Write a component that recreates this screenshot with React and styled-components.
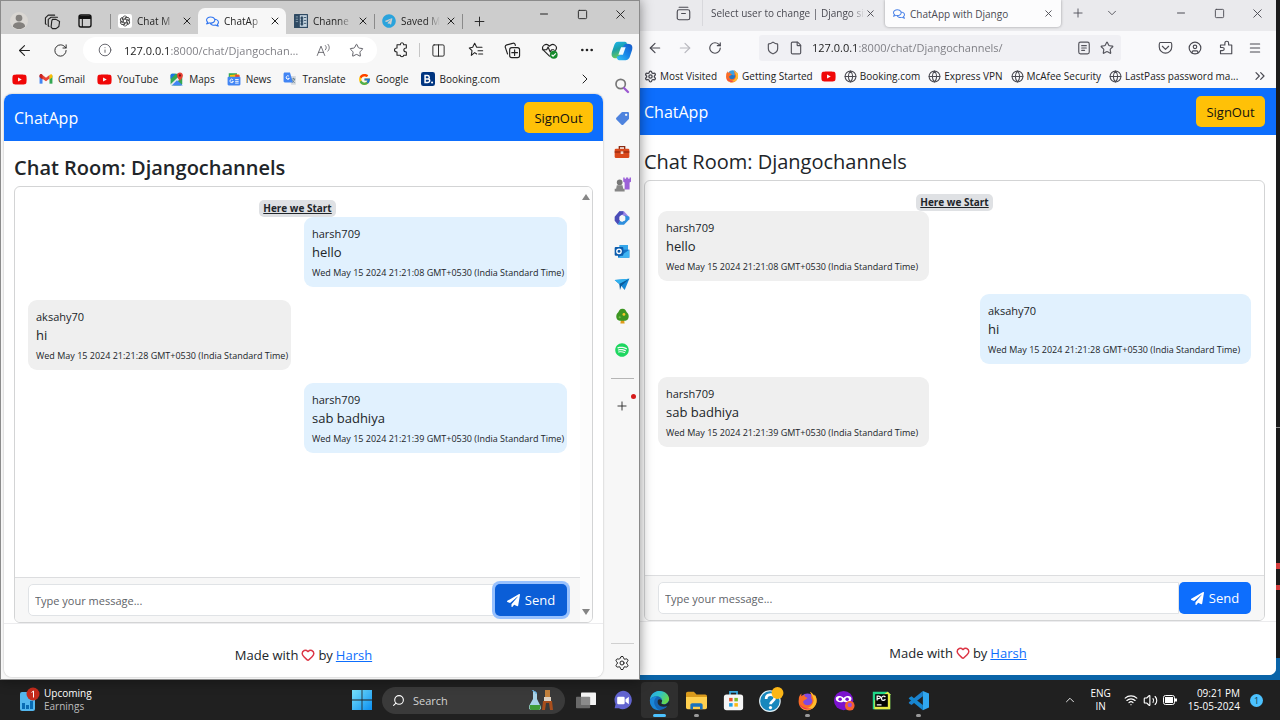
import React from "react";
import styled, { createGlobalStyle, css } from "styled-components";
import {
  ArrowLeft, ArrowRight, RotateCw, X, Plus, Minus, Square, Info, Star, Columns2,
  Ellipsis, ChevronRight, ChevronDown, ChevronUp, ChevronsRight, Search, Settings, Shield, File,
  Globe, Menu, Wifi, Volume2, CircleUser, Heart,
} from "lucide-react";
import { FaRegComments, FaPaperPlane, FaYoutube, FaTelegram, FaSpotify, FaTag } from "react-icons/fa";
import { FcGoogle } from "react-icons/fc";

const GlobalStyle = createGlobalStyle`
  *, *::before, *::after { box-sizing: border-box; }
  body {
    margin: 0;
    font-family: "Open Sans", "Noto Sans", sans-serif;
    font-size: 14px;
    color: #212529;
    background: #1c1c1c;
  }
  button, input { font: inherit; color: inherit; margin: 0; }
  button { border: 0; padding: 0; background: none; }
  svg { display: block; flex: none; }
`;

/* ---------- desktop ---------- */

const Desktop = styled.div`
  min-height: 100vh;
  display: grid;
  grid-template-rows: 1fr 40px;
`;

const Workspace = styled.div`
  display: grid;
  grid-template-columns: minmax(0, 1fr) minmax(0, 1fr);
  background:
    linear-gradient(#d33c3c, #d33c3c) right 0 top 563px / 4px 6px no-repeat,
    linear-gradient(#d33c3c, #d33c3c) right 0 top 585px / 4px 5px no-repeat,
    linear-gradient(#8a8a8a, #8a8a8a) right 0 top 427px / 4px 1px no-repeat,
    linear-gradient(#0a64a8, #0a64a8) bottom / 100% 22px no-repeat,
    #1b1b1b;
`;

const EdgeWindow = styled.section`
  position: relative;
  z-index: 1;
  display: flex;
  flex-direction: column;
  border: 1px solid #8b8b8b;
  background: #f7f7f7;
  box-shadow: 0 0 12px rgba(0, 0, 0, 0.45);
`;

const FirefoxWindow = styled.section`
  display: flex;
  flex-direction: column;
  margin: 0 4px 5px 0;
  background: #f9f9fb;
  border-radius: 0 0 7px 0;
  overflow: hidden;
`;

const TabStrip = styled.div`
  display: flex;
  height: ${(p) => (p.$firefox ? 31 : 33)}px;
  background: ${(p) => (p.$firefox ? "#eaeaed" : "#cdcdcd")};
`;

const StripIcons = styled.div`
  display: flex;
  align-items: center;
  gap: 16px;
  color: #4a4a52;
  padding: ${(p) => (p.$firefox ? "0 11px 4px 36px" : "7px 17px 0 9px")};
`;

const EdgeTab = styled.div`
  display: flex;
  align-items: center;
  flex: none;
  gap: 5px;
  width: 88px;
  height: 26px;
  margin-top: 7px;
  padding: 0 7px 0 8px;
  font-size: 10px;
  color: #222;
  ${(p) => p.$active && css`background: #f7f7f7; border-radius: 7px 7px 0 0;`}
  ${(p) => p.$divided && css`background: linear-gradient(#8a8a8a, #8a8a8a) left center / 1px 15px no-repeat;`}
`;

const NewTabCell = styled(EdgeTab)`
  width: 34px;
`;

const FirefoxTab = styled.div`
  display: flex;
  align-items: center;
  gap: ${(p) => (p.$active ? 5 : 0)}px;
  width: ${(p) => (p.$active ? 176 : 181)}px;
  height: ${(p) => (p.$active ? 27 : 26)}px;
  margin-right: ${(p) => (p.$active ? 0 : 2)}px;
  padding: 0 8px;
  font-size: 10px;
  color: #4a4a52;
  border-left: 1px solid #d8d8dc;
  ${(p) => p.$active && css`
    background: #fcfcfd;
    border: 0;
    border-radius: 0 0 4px 4px;
    box-shadow: 0 0 3px rgba(0, 0, 0, 0.35);
  `}
`;

const TabTitle = styled.button`
  flex: 1;
  min-width: 0;
  overflow: hidden;
  white-space: nowrap;
  text-align: left;
  ${(p) => p.$fade && css`mask-image: linear-gradient(90deg, #000 calc(100% - 14px), transparent);`}
`;

const IconButton = styled.button`
  display: grid;
  place-items: center;
  flex: none;
  width: ${(p) => p.$w || 30}px;
  height: ${(p) => p.$h || 26}px;
  color: ${(p) => p.$color || "#222"};
`;

const CloseButton = styled(IconButton)`
  width: 10px;
  height: 14px;
`;

const WindowControls = styled.div`
  display: flex;
  margin-left: auto;
`;

/* ---------- address bars ---------- */

const Toolbar = styled.div`
  display: flex;
  align-items: center;
  height: ${(p) => (p.$firefox ? 33 : 32)}px;
  padding-left: ${(p) => (p.$firefox ? 0 : 5)}px;
  padding-right: ${(p) => (p.$firefox ? 6 : 0)}px;
`;

const AddressBar = styled.label`
  display: flex;
  align-items: center;
  flex: 1;
  min-width: 0;
  height: 26px;
  gap: ${(p) => (p.$firefox ? 9 : 12)}px;
  padding: ${(p) => (p.$firefox ? "0 7px" : "0 8px 0 15px")};
  margin: ${(p) => (p.$firefox ? "0 29px 0 29px" : "0 5px 0 5px")};
  border-radius: ${(p) => (p.$firefox ? 3 : 13)}px;
  background: ${(p) => (p.$firefox ? "#f0f0f4" : "#fff")};
  color: #55555d;
`;

const AddressInput = styled.input`
  flex: 1;
  min-width: 0;
  width: 0;
  border: 0;
  padding: 0;
  outline: 0;
  font-size: 11px;
  text-overflow: ellipsis;
  color: transparent;
  background: linear-gradient(90deg, #1b1b1b 46px, #7a7a80 46px);
  background-clip: text;
`;

const Divider = styled.span`
  width: 1px;
  height: 14px;
  background: #c6c6c6;
`;

const Bookmarks = styled.nav`
  display: flex;
  align-items: center;
  height: ${(p) => (p.$firefox ? 24 : 28)}px;
  gap: ${(p) => (p.$firefox ? 8 : 12)}px;
  padding: ${(p) => (p.$firefox ? "0 10px 0 4px" : "0 14px 2px 11px")};
  font-size: 10px;
`;

const Bookmark = styled.a`
  display: flex;
  align-items: center;
  gap: ${(p) => (p.$firefox ? 3 : 5)}px;
  color: #222;
  text-decoration: none;
  white-space: nowrap;
`;

const Overflow = styled(IconButton)`
  margin-left: auto;
  width: 14px;
`;

const EdgeBody = styled.div`
  flex: 1;
  display: flex;
`;

const EdgeMain = styled.div`
  flex: 1;
  min-width: 0;
  display: flex;
  flex-direction: column;
`;

const PageFrame = styled.div`
  flex: 1;
  display: flex;
  margin: 0 2px 2px 3px;
  border-radius: 8px;
  overflow: hidden;
  box-shadow: 0 0 2px rgba(0, 0, 0, 0.3);
`;

const Sidebar = styled.aside`
  display: flex;
  flex-direction: column;
  align-items: center;
  width: 34px;
`;

const SideButton = styled(IconButton)`
  position: relative;
  width: 34px;
  height: 33px;
  ${(p) => p.$first && css`margin-bottom: 2px;`}
`;

const SideRule = styled.span`
  width: 23px;
  height: 1px;
  margin: 12px 0 10px;
  background: #b5b5b5;
`;

const BottomRule = styled(SideRule)`
  margin: auto 0 2px;
  background: #d0d0d0;
`;

const RedDot = styled.span`
  position: absolute;
  top: 5px;
  right: 3px;
  width: 5px;
  height: 5px;
  border-radius: 50%;
  background: #d51a1a;
`;

/* ---------- chat page ---------- */

const Page = styled.div`
  flex: 1;
  min-width: 0;
  display: flex;
  flex-direction: column;
  background: #fff;
`;

const PageHeader = styled.header`
  display: flex;
  align-items: center;
  justify-content: space-between;
  height: 47px;
  padding: ${(p) => (p.$firefox ? "0 11px 0 4px" : "0 10px")};
  background: #0d6efd;
`;

const Brand = styled.a`
  font-size: 16px;
  color: #fff;
  text-decoration: none;
`;

const SignOut = styled.button`
  width: 69px;
  height: 31px;
  border-radius: 5px;
  font-size: 13px;
  color: #111;
  background: #ffc107;
`;

const PageMain = styled.main`
  flex: 1;
  display: flex;
  flex-direction: column;
  padding: ${(p) => (p.$firefox ? "15px 11px 0 4px" : "15px 10px 0")};
`;

const Title = styled.h1`
  margin: 0 0 6px;
  font-size: 20px;
  line-height: 24px;
  font-weight: ${(p) => (p.$firefox ? 400 : 600)};
`;

const Card = styled.div`
  flex: 1;
  display: flex;
  border: 1px solid #d3d4d5;
  border-radius: 6px;
  overflow: hidden;
`;

const CardContent = styled.div`
  flex: 1;
  min-width: 0;
  display: flex;
  flex-direction: column;
`;

const Messages = styled.div`
  flex: 1;
  display: flex;
  flex-direction: column;
  padding: 13px;
`;

const StartBadge = styled.span`
  align-self: center;
  padding: 0 4px;
  border-radius: 5px;
  font-size: 10px;
  line-height: 17px;
  font-weight: 700;
  text-decoration: underline;
  background: #dfe1e4;
`;

const Bubble = styled.article`
  align-self: ${(p) => (p.$mine ? "flex-end" : "flex-start")};
  width: ${(p) => (p.$wide ? 271 : 263)}px;
  height: 70px;
  margin-bottom: 13px;
  padding: 8px;
  border-radius: 9px;
  white-space: nowrap;
  background: ${(p) => (p.$mine ? "#e1f1fe" : "#efefef")};
`;

const Author = styled.div`
  font-size: 11px;
  line-height: 18px;
`;

const Body = styled.div`
  font-size: 13px;
  line-height: 18px;
`;

const Stamp = styled.time`
  display: block;
  margin-top: 5px;
  font-size: 9px;
  line-height: 14px;
`;

const Composer = styled.form`
  display: flex;
  padding: 6px 13px;
  border-top: 1px solid #dcdddf;
  background: #f7f7f7;
`;

const MessageInput = styled.input`
  flex: 1;
  min-width: 0;
  height: 32px;
  padding: 0 6px;
  border: 1px solid #e0e3e6;
  border-radius: 5px 0 0 5px;
  font-size: 11px;
  background: #fff;
  &::placeholder { color: #5f6469; opacity: 1; }
`;

const SendButton = styled.button`
  display: flex;
  align-items: center;
  justify-content: center;
  gap: 5px;
  width: 72px;
  height: 32px;
  border-radius: 5px;
  font-size: 13px;
  color: #fff;
  background: ${(p) => (p.$focused ? "#0b5ed7" : "#0d6efd")};
  box-shadow: ${(p) => (p.$focused ? "0 0 0 3px #98c1fe" : "none")};
`;

const ScrollTrack = styled.div`
  display: flex;
  flex-direction: column;
  align-items: center;
  justify-content: space-between;
  width: 12px;
  padding: 7px 0;
  background: #fcfcfc;
`;

const PageFooter = styled.footer`
  display: flex;
  align-items: center;
  justify-content: center;
  gap: 3px;
  height: 54px;
  padding-top: 8px;
  border-top: 1px solid #ececee;
  font-size: 13px;
  a { color: #0d6efd; }
`;

/* ---------- taskbar ---------- */

const Taskbar = styled.footer`
  display: grid;
  grid-template-columns: 1fr auto 1fr;
  align-items: center;
  background: #202020;
  color: #fff;
  font-size: 10px;
  line-height: 13px;
`;

const Widget = styled.button`
  justify-self: start;
  display: flex;
  align-items: center;
  gap: 4px;
  padding-left: 19px;
  text-align: left;
  span { color: #bdbdbd; }
`;

const TaskCenter = styled.div`
  display: flex;
  align-items: center;
`;

const TaskButton = styled.button`
  position: relative;
  display: grid;
  place-items: center;
  width: 37px;
  height: 36px;
  border-radius: 4px;
  background: ${(p) => (p.$active ? "#2f2f2f" : "none")};
  &::after {
    content: "";
    position: absolute;
    bottom: 1px;
    width: ${(p) => (p.$active ? 13 : 5)}px;
    height: 3px;
    border-radius: 2px;
    background: ${(p) => (p.$active ? "#4cc2ff" : p.$running ? "#9a9a9a" : "transparent")};
  }
`;

const SearchBox = styled.label`
  display: flex;
  align-items: center;
  gap: 8px;
  width: 183px;
  height: 27px;
  margin: 0 2px;
  padding: 0 11px 0 10px;
  border-radius: 14px;
  background: #3a3a3a;
`;

const SearchInput = styled.input`
  flex: 1;
  width: 0;
  border: 0;
  padding: 0;
  outline: 0;
  background: none;
  font-size: 11px;
  &::placeholder { color: #d2d2d2; opacity: 1; }
`;

const Tray = styled.div`
  justify-self: end;
  display: flex;
  align-items: center;
  gap: 5px;
  padding-right: 17px;
`;

const TrayText = styled.div`
  padding: ${(p) => (p.$align === "center" ? "0 8px" : "0 5px 0 6px")};
  text-align: ${(p) => p.$align};
`;

const CountBadge = styled.span`
  display: grid;
  place-items: center;
  width: 13px;
  height: 13px;
  border-radius: 50%;
  font-size: 9px;
  color: #14394d;
  background: #4cc2ff;
`;

/* ---------- drawings ---------- */

const Svg = ({ s = 16, children, ...rest }) => (
  <svg width={s} height={s} viewBox="0 0 24 24" fill="none" aria-hidden="true" {...rest}>{children}</svg>
);
const line = { stroke: "currentColor", strokeWidth: 1.6, strokeLinecap: "round", strokeLinejoin: "round" };

const YouTube = () => <FaYoutube size={15} color="#f00707" />;
const Gmail = () => (
  <Svg s={14}>
    <path d="M1 20V6h5v14z" fill="#4285f4" /><path d="M18 20V6h5v14z" fill="#34a853" />
    <path d="M1 7c0-4 3-4 5-2l6 5 6-5v6l-6 5-11-8z" fill="#ea4335" /><path d="M18 5c2-2 5-2 5 2v2l-5 4z" fill="#fbbc04" />
    <path d="M1 7c0-3 2-4 4-3l1 1v8l-5-4z" fill="#c5221f" />
  </Svg>
);
const MapsIcon = () => (
  <Svg s={14}>
    <rect x="1" y="3" width="20" height="20" rx="3" fill="#34a853" /><path d="M1 21 20 3 23 6 6 23H3z" fill="#e8eaed" />
    <path d="M3 23 12 14l10 9z" fill="#4285f4" /><path d="M1 12 10 3H4C2 3 1 4 1 6z" fill="#1a73e8" />
    <path d="M17 1c-3 0-5 2-5 5 0 4 5 9 5 9s5-5 5-9c0-3-2-5-5-5z" fill="#ea4335" /><circle cx="17" cy="6" r="2" fill="#7b1712" />
  </Svg>
);
const NewsIcon = () => (
  <Svg s={14}>
    <path d="M3 2h14l1 7H3z" fill="#34a853" /><path d="m5 5 16-1v5H5z" fill="#fbbc04" /><path d="m14 4 8 2-1 4h-7z" fill="#ea4335" />
    <rect x="1" y="8" width="22" height="15" rx="2" fill="#4285f4" />
    <path d="M10 13a3 3 0 1 0 1 3H8M14 13h6M14 16h6M14 19h6" stroke="#fff" strokeWidth="1.6" />
  </Svg>
);
const TranslateIcon = () => (
  <Svg s={14}>
    <path d="M10 7h12v15H14z" fill="#d5d9df" /><path d="M2 1h10l5 17H3c-1 0-2-1-2-2V3z" fill="#4285f4" />
    <path d="M10 7a3 3 0 1 0 1 4H8" stroke="#fff" strokeWidth="1.6" /><path d="M15 12h6m-3-2v2m2 0c-1 4-3 5-4 6m0-4 4 5" stroke="#617d8b" strokeWidth="1.4" />
  </Svg>
);
const BookingIcon = () => (
  <Svg s={14}>
    <rect width="24" height="24" rx="4" fill="#003580" />
    <path d="M7 6v12h4c5 0 5-6 1-6 3 0 3-6-1-6zm0 6h5" stroke="#fff" strokeWidth="2.6" /><circle cx="19" cy="18" r="1.8" fill="#fff" />
  </Svg>
);
const Avatar = () => (
  <Svg s={18}><circle cx="12" cy="12" r="12" fill="#dad7d3" /><circle cx="12" cy="8" r="4.5" fill="#83807d" /><path d="M4 19c0-7 16-7 16 0-3 5-13 5-16 0z" fill="#83807d" /></Svg>
);
const Workspaces = () => (
  <Svg s={17} {...line} stroke="#222">
    <path d="M12 9h5l5 3-1 7-4 3h-5l-2-2 1-9zM7 19l-1-1V9l4-3h9M3 16l-1-1V7l4-4h9" />
  </Svg>
);
const TabActions = () => (
  <Svg s={16}><rect x="3" y="3" width="18" height="18" rx="3" stroke="#111" strokeWidth="2" /><path d="M3 4h18v5H3z" fill="#111" /><path d="M8 9v12" stroke="#111" strokeWidth="1.5" /></Svg>
);
const OpenAi = () => (
  <Svg s={14}>
    <rect width="24" height="24" rx="4" fill="#fff" />
    <g stroke="#222" strokeWidth="1.3">
      {[0, 60, 120, 180, 240, 300].map((a) => (
        <path key={a} transform={`rotate(${a} 12 12)`} d="M12 8.500 8.500 10.500V6C9 3.200 13 2.500 15 5l-3.500 2" />
      ))}
    </g>
  </Svg>
);
const ChannelsIcon = () => (
  <Svg s={14}>
    <rect width="24" height="24" rx="1" fill="#2f4a63" /><path d="M10 2h12v20H10z" fill="#c5d4df" />
    <path d="M12 5h3v4h-3zm0 5h3v4h-3zm0 5h3v4h-3zM17 6h4M17 11h4M17 16h4" fill="#2f4a63" stroke="#2f4a63" strokeWidth="1.5" />
    <path d="M3 5h4M3 9h4M3 13h4" stroke="#8fa5b6" strokeWidth="1.5" />
  </Svg>
);
const Comments = ({ color = "#2f74f0", size = 13 }) => <FaRegComments size={size} color={color} />;
const ReadAloud = () => (
  <Svg s={15} {...line} strokeWidth={1.3}><path d="M2 20 8 5l6 15M4 15h8M15 4c2 2 2 5 0 7M19 2c3 3 3 8 0 11" /></Svg>
);
const EdgePuzzle = () => (
  <Svg s={16} {...line}>
    <path d="M8 4h3c0-4 5-4 5 0h4v5c-5 0-5 6 0 6v5h-4c0 3-5 3-5 0H6v-5c-5 0-5-6 0-6V4z" />
  </Svg>
);
const ArchiveBox = () => (
  <Svg s={15} {...line} strokeWidth={1.8}><path d="M5 2h14" /><rect x="2" y="6" width="20" height="16" rx="3" /><path d="M9 12h6" /></Svg>
);
const Favorites = () => (
  <Svg s={16} {...line}><path d="M13 18 10 16 5 20l1-7-4-4 5-1 3-6 3 6h8M15 13h7M16 18h6" /></Svg>
);
const Collections = () => (
  <Svg s={17} {...line}><rect x="8" y="8" width="14" height="14" rx="3" /><path d="M15 11v8M11 15h8M5 17l-3-9c-1-2 0-3 2-4l8-2c2-1 4 0 4 3" /></Svg>
);
const Essentials = () => (
  <Svg s={17}>
    <path d="M12 20 3 11C0 6 7 0 12 6c5-6 12 0 9 5l-2 2M2 11h6l2-4 3 7 2-3h3" {...line} />
    <circle cx="18" cy="18" r="5.500" fill="#158a2c" /><path d="m15 18 2 2 4-4" stroke="#fff" strokeWidth="1.500" />
  </Svg>
);
const Copilot = () => (
  <Svg s={22}>
    <defs>
      <linearGradient id="cpA" x1="0" y1="0" x2="0.300" y2="1"><stop stopColor="#1bb6ee" /><stop offset="0.500" stopColor="#1a9fa9" /><stop offset="1" stopColor="#6acb5b" /></linearGradient>
      <linearGradient id="cpB" x1="1" y1="0" x2="0" y2="1"><stop stopColor="#1557c8" /><stop offset="0.500" stopColor="#1785e8" /><stop offset="1" stopColor="#34c5f3" /></linearGradient>
    </defs>
    <path d="M8 2h7c2 0 2 1 3 4-3 0-4 1-5 4l-2 6c-1 3-2 4-5 4-5 0-6-3-5-7l2-6c1-3 2-5 5-5z" fill="url(#cpA)" />
    <path d="M16 22H9c-2 0-2-1-3-4 3 0 4-1 5-4l2-6c1-3 2-4 5-4 5 0 6 3 5 7l-2 6c-1 3-2 5-5 5z" fill="url(#cpB)" />
    <path d="m11 8-3 8h5l3-8z" fill="#effaff" />
  </Svg>
);
const SideSearch = () => (
  <Svg s={16}><circle cx="10" cy="9" r="7" stroke="#777" strokeWidth="2.500" /><path d="m15 15 6 6" stroke="#9b59d0" strokeWidth="3.500" strokeLinecap="round" /></Svg>
);
const Toolbox = () => (
  <Svg s={16}><path d="M8 8V4h8v4" stroke="#8b2c14" strokeWidth="2" /><rect x="1" y="7" width="22" height="14" rx="2" fill="#d9481c" /><path d="M1 12h22" stroke="#98290f" strokeWidth="2" /><path d="M10 11h4v4h-4z" fill="#f4d9cc" /></Svg>
);
const Games = () => (
  <Svg s={17}><path d="M13 2h2v2h2V2h3v2h2V2h2v6l-2 1v10h-7V9l-2-1z" fill="#9c62d8" /><circle cx="8" cy="9" r="4" fill="#777" /><path d="M4 13h8l1 5h2v4H1v-4h2z" fill="#868686" /></Svg>
);
const M365 = () => (
  <Svg s={16}>
    <path d="M8 2h7l8 9v4l-8-6H8z" fill="#9d86e8" /><path d="M8 2 1 10v6l5 6 3-5V9l5-3V2z" fill="#4b4db8" />
    <path d="M6 22h9l8-8v-4l-7-2v8l-8 1z" fill="#2f8fdd" /><path d="m12 7 5 3v5l-5 3-4-3v-5z" fill="#f7f7f7" />
  </Svg>
);
const Outlook = () => (
  <Svg s={16}>
    <path d="M8 3h13v8H8z" fill="#35a6ea" /><path d="M6 10h17v12H6z" fill="#1571c4" /><path d="m6 22 17-12v12z" fill="#3fb4f3" />
    <rect x="1" y="6" width="13" height="13" rx="1.500" fill="#0b5cad" /><circle cx="7.500" cy="12.500" r="3.300" stroke="#fff" strokeWidth="2" />
  </Svg>
);
const Plane = () => (
  <Svg s={16}><path d="m1 6 22-2-7 17-5-6z" fill="#1688d6" /><path d="M1 6 23 4 8 12z" fill="#32b1ee" /><path d="m8 12 15-8-12 11-2 6z" fill="#0c5c9c" /></Svg>
);
const Tree = () => (
  <Svg s={17}><path d="M10 15h4l1 7h-6z" fill="#e09b1a" /><path d="M12 1c4 0 5 3 6 5 4 3 4 11-2 12H8C2 17 2 9 6 6c1-2 2-5 6-5z" fill="#3d9622" /><circle cx="14" cy="9" r="2" fill="#f5c52b" /><circle cx="8" cy="13" r="1.500" fill="#72c148" /></Svg>
);
const Triangle = ({ down }) => (
  <svg width="8" height="6" viewBox="0 0 8 6" aria-hidden="true"><path d={down ? "M0 0h8L4 6z" : "M0 6h8L4 0z"} fill="#858585" /></svg>
);
const FirefoxLogo = ({ s = 20, old }) => (
  <Svg s={s}>
    <circle cx="12" cy="13" r="9" fill={old ? "#2478c5" : "#8148e0"} />
    {old && <path d="M6 6c3-5 11-5 14 0l-4 5-6-1z" fill="#3aa0e0" />}
    <path d="M12 23C5 23 1 18 2 11c0-3 1-5 3-7v3l4-2c-1 2 0 3 3 4-1 2-4 2-5 4 0 4 5 6 9 3 2-2 2-5 0-7 1-3 0-5-1-7 3 2 4 4 5 5l0-2c6 8 0 18-8 18z" fill="#fb6b26" />
    <path d="M20 5c6 8 0 18-8 18-4 0-7-2-8-4 6 4 14 1 15-7 0-3-2-6-4-10 3 2 4 4 5 5z" fill="#ffbd2c" />
    <path d="M3 16c2 6 9 8 14 5-5 1-11-1-14-5z" fill="#ee3358" />
  </Svg>
);
const ReaderIcon = () => <Svg s={14} {...line} strokeWidth={2}><rect x="3" y="2" width="18" height="20" rx="3" /><path d="M8 8h8M8 12h8M8 16h5" /></Svg>;
const Pocket = () => <Svg s={15} {...line} strokeWidth={1.800}><path d="M4 4h16c2 0 2 1 2 3v4c0 6-5 10-10 10S2 17 2 11V7c0-2 0-3 2-3z" /><path d="m7 10 5 5 5-5" /></Svg>;
const Extension = () => <Svg s={15} {...line} strokeWidth={1.800}><path d="M11 8V5c0-4 6-4 6 0v3h5v14H4v-5h3c4 0 4-5 0-5H4V8z" /></Svg>;

const EarningsIcon = () => (
  <svg width="21" height="26" viewBox="0 0 21 26" aria-hidden="true">
    <rect x="1" y="5" width="15" height="19" rx="2" fill="#53b7ef" /><path d="M3 16h3v6H3zm4 2h3v4H7zm4-4h3v8h-3z" fill="#096bb3" />
    <circle cx="14" cy="7" r="6.500" fill="#c42b1c" /><path d="m12.500 5.500 2-1.500v6.500" stroke="#fff" fill="none" />
  </svg>
);
const StartIcon = () => (
  <Svg s={20}>
    <defs><linearGradient id="win" x1="0" y1="0" x2="24" y2="24" gradientUnits="userSpaceOnUse"><stop stopColor="#79e3fb" /><stop offset="1" stopColor="#0a8ef0" /></linearGradient></defs>
    <path d="M0 0h11.500v11.500H0zM12.500 0H24v11.500H12.500zM0 12.500h11.500V24H0zM12.500 12.500H24V24H12.500z" fill="url(#win)" />
  </Svg>
);
const LabArt = () => (
  <svg width="25" height="22" viewBox="0 0 25 22" aria-hidden="true">
    <path d="M4 1v9L0 17c-1 3 1 4 3 4h6c3 0 4-2 2-5L8 10V4" fill="#a8d3e8" /><path d="m1 16 10 0c1 3 0 5-2 5H3c-2 0-3-2-2-5z" fill="#3f9c38" />
    <path d="M3 1c2 3 5 0 4 4" stroke="#4fa1d9" fill="none" />
    <path d="M16 1h5v7h-5z" fill="#c3813c" /><path d="M15 8h7v4h-7z" fill="#ded2c3" /><path d="M14 12h9l1 9h-3l-1-7h-3l-1 7h-3z" fill="#a84e1c" />
  </svg>
);
const TaskView = () => <Svg s={20}><rect x="6" y="3" width="18" height="15" rx="1" fill="#f4f4f4" /><rect x="0" y="8" width="17" height="14" rx="1" fill="#777" fillOpacity="0.850" /></Svg>;
const ChatIcon = () => <Svg s={20}><path d="M12 1a11 11 0 1 1-5 21H2l1-5A11 11 0 0 1 12 1z" fill="#6264cf" /><rect x="5" y="8" width="9" height="9" rx="1.500" fill="#fff" /><path d="m15 11 4-3v9l-4-3z" fill="#fff" /></Svg>;
const EdgeIcon = () => (
  <Svg s={21}>
    <defs><linearGradient id="edA" x1="0" y1="0" x2="1" y2="0.500"><stop stopColor="#2aa6e8" /><stop offset="0.500" stopColor="#2fc2c8" /><stop offset="1" stopColor="#67d84e" /></linearGradient></defs>
    <circle cx="12" cy="12" r="11" fill="#1565b5" />
    <path d="M1 11C2 4 7 1 12 1c7 0 11 5 11 9 0 5-5 7-8 6-2-1 0-2 0-4 0-3-3-5-6-5-4 0-7 2-8 4z" fill="url(#edA)" />
    <path d="M1 12c1-3 4-5 8-4-3 2-4 6-2 10 1 3 4 5 6 5C6 24 1 19 1 12z" fill="#1a86d8" />
    <path d="M10 12c-1 5 3 9 12 6 1 0 1 0 0 2 2-3 1-5 1-8-2 5-6 5-8 4-2-1 0-2 0-4-2-2-4-2-5 0z" fill="#202830" />
  </Svg>
);
const FolderIcon = () => <Svg s={21}><path d="M0 4c0-1 1-2 2-2h7l3 3h10c1 0 2 1 2 2v13H0z" fill="#d99a1c" /><path d="M0 8h24v12c0 1-1 2-2 2H2c-1 0-2-1-2-2z" fill="#ffd04f" /><path d="M5 17c0-1 1-2 2-2h10c1 0 2 1 2 2v5h-3v-3H8v3H5z" fill="#1a72bd" /></Svg>;
const StoreIcon = () => <Svg s={21}><path d="M8 7V2h8v5" stroke="#38a7dc" strokeWidth="2" /><rect x="1" y="5" width="22" height="18" rx="3" fill="#f5f5f5" /><path d="M7 9h4v4H7z" fill="#e8502a" /><path d="M13 9h4v4h-4z" fill="#7fba2b" /><path d="M7 15h4v4H7z" fill="#1ca1e8" /><path d="M13 15h4v4h-4z" fill="#fdb913" /></Svg>;
const HelpIcon = () => (
  <Svg s={26}><circle cx="11" cy="13" r="9.500" fill="#1787bd" stroke="#e6f4fa" /><path d="M7.500 11c0-5 8-5 8-1 0 3-4 3-4 6" stroke="#fff" strokeWidth="2.500" /><circle cx="11.500" cy="19" r="1.500" fill="#fff" /><circle cx="18" cy="5.500" r="5.500" fill="#fbb616" /></Svg>
);
const PrivateFox = () => (
  <Svg s={21}><circle cx="11" cy="12" r="11" fill="#7b12ce" /><path d="M2 10c0-4 6-4 9-1 3-3 9-3 9 1s-6 5-9 3c-3 2-9 1-9-3z" fill="#fff" /><circle cx="7" cy="10.500" r="2" fill="#7b12ce" /><circle cx="15" cy="10.500" r="2" fill="#7b12ce" /><circle cx="18" cy="18" r="5.500" fill="#f6622f" /><circle cx="18" cy="17" r="2.500" fill="#a24be0" /></Svg>
);
const PyCharm = () => (
  <Svg s={19}><path d="M1 1h19l3 3v19H1z" fill="#21d789" /><path d="m20 1 3 3v19H3V12z" fill="#e9ec45" /><path d="M4 4h16v16H4z" fill="#050505" /><path d="M6.500 12V6.500h2c3 0 3 3 0 3h-2M17 7.500c-2-2-5-1-5 2s3 3 5 1M6 17.500h6" stroke="#fff" strokeWidth="1.600" /></Svg>
);
const VsCode = () => (
  <Svg s={21}><path d="M17 1 24 4v16l-7 3z" fill="#30a7f0" /><path d="M17 1v6L4 17l-3-2v-1z" fill="#1b82cf" /><path d="M17 23v-6L4 7 1 9v1z" fill="#1687d0" /></Svg>
);
const Battery = () => <svg width="14" height="10" viewBox="0 0 14 10" aria-hidden="true"><rect x="0.500" y="0.500" width="11" height="9" rx="2" stroke="#fff" fill="none" /><rect x="2" y="2" width="8" height="6" fill="#fff" /><path d="M12 3.500h2v3h-2z" fill="#fff" /></svg>;

/* ---------- shared parts ---------- */

const CONVERSATION = [
  { from: "harsh709", text: "hello", at: "Wed May 15 2024 21:21:08 GMT+0530 (India Standard Time)" },
  { from: "aksahy70", text: "hi", at: "Wed May 15 2024 21:21:28 GMT+0530 (India Standard Time)" },
  { from: "harsh709", text: "sab badhiya", at: "Wed May 15 2024 21:21:39 GMT+0530 (India Standard Time)" },
];

function ChatPage({ user, firefox }) {
  return (
    <Page>
      <PageHeader $firefox={firefox}>
        <Brand href="#home">ChatApp</Brand>
        <SignOut type="button">SignOut</SignOut>
      </PageHeader>
      <PageMain $firefox={firefox}>
        <Title $firefox={firefox}>Chat Room: Djangochannels</Title>
        <Card>
          <CardContent>
            <Messages>
              <StartBadge>Here we Start</StartBadge>
              {CONVERSATION.map((m) => (
                <Bubble key={m.at} $mine={m.from === user} $wide={firefox}>
                  <Author>{m.from}</Author>
                  <Body>{m.text}</Body>
                  <Stamp>{m.at}</Stamp>
                </Bubble>
              ))}
            </Messages>
            <Composer onSubmit={(e) => e.preventDefault()}>
              <MessageInput aria-label="Message" placeholder="Type your message..." />
              <SendButton type="submit" $focused={!firefox}><FaPaperPlane size={13} />Send</SendButton>
            </Composer>
          </CardContent>
          {!firefox && <ScrollTrack><Triangle /><Triangle down /></ScrollTrack>}
        </Card>
      </PageMain>
      <PageFooter>
        Made with <Heart size={14} color="#dc3545" strokeWidth={2.500} /> by <a href="#harsh">Harsh</a>
      </PageFooter>
    </Page>
  );
}

function Controls({ firefox }) {
  const color = firefox ? "#4a4a52" : "#222";
  return (
    <WindowControls>
      <IconButton $w={38} aria-label="Minimize" $color={color}><Minus size={12} strokeWidth={2} /></IconButton>
      <IconButton $w={38} aria-label="Maximize" $color={color}><Square size={11} strokeWidth={2} /></IconButton>
      <IconButton $w={38} aria-label="Close window" $color={color}><X size={15} strokeWidth={1.500} /></IconButton>
    </WindowControls>
  );
}

const EDGE_TABS = [
  { title: "Chat M", icon: <OpenAi />, divided: true },
  { title: "ChatAp", icon: <Comments />, active: true },
  { title: "Channe", icon: <ChannelsIcon /> },
  { title: "Saved M", icon: <FaTelegram size={14} color="#2aa3dc" />, divided: true },
];

const EDGE_BOOKMARKS = [
  ["", <YouTube />], ["Gmail", <Gmail />], ["YouTube", <YouTube />], ["Maps", <MapsIcon />], ["News", <NewsIcon />],
  ["Translate", <TranslateIcon />], ["Google", <FcGoogle size={13} />], ["Booking.com", <BookingIcon />],
];

const SIDE_APPS = [
  ["Search", <SideSearch />], ["Shopping", <FaTag size={13} color="#4e83de" style={{ transform: "scaleX(-1)" }} />], ["Tools", <Toolbox />],
  ["Games", <Games />], ["Microsoft 365", <M365 />], ["Outlook", <Outlook />], ["Drop", <Plane />], ["Tree", <Tree />],
  ["Spotify", <FaSpotify size={14} color="#1ed760" />],
];

const globe = <Globe size={13} strokeWidth={2} color="#4a4a52" />;
const FIREFOX_BOOKMARKS = [
  ["Most Visited", <Settings size={13} strokeWidth={2.500} color="#4a4a52" />], ["Getting Started", <FirefoxLogo s={14} old />],
  ["", <YouTube />], ["Booking.com", globe], ["Express VPN", globe], ["McAfee Security", globe], ["LastPass password ma...", globe],
];

const TASKS = [
  ["Task view", <TaskView />], ["Chat", <ChatIcon />], ["Microsoft Edge", <EdgeIcon />, "active"], ["File Explorer", <FolderIcon />, "running"],
  ["Microsoft Store", <StoreIcon />], ["Get Help", <HelpIcon />], ["Firefox", <FirefoxLogo s={21} />, "running"],
  ["Private browsing", <PrivateFox />], ["PyCharm", <PyCharm />], ["Visual Studio Code", <VsCode />, "running"],
];

function Edge() {
  return (
    <EdgeWindow>
      <TabStrip>
        <StripIcons><Avatar /><Workspaces /><TabActions /></StripIcons>
        {EDGE_TABS.map((t) => (
          <EdgeTab key={t.title} $active={t.active} $divided={t.divided}>
            {t.icon}
            <TabTitle $fade>{t.title}</TabTitle>
            <CloseButton aria-label={`Close ${t.title}`}><X size={12} strokeWidth={2} /></CloseButton>
          </EdgeTab>
        ))}
        <NewTabCell $divided><IconButton $w={18} aria-label="New tab"><Plus size={15} strokeWidth={1.500} /></IconButton></NewTabCell>
        <Controls />
      </TabStrip>
      <EdgeBody>
        <EdgeMain>
          <Toolbar>
            <IconButton $w={36} aria-label="Back"><ArrowLeft size={17} strokeWidth={1.500} /></IconButton>
            <IconButton $w={36} aria-label="Refresh"><RotateCw size={15} strokeWidth={1.500} /></IconButton>
            <AddressBar>
              <Info size={14} strokeWidth={1.500} />
              <AddressInput aria-label="Address" readOnly value="127.0.0.1:8000/chat/Djangochannels/" />
              <ReadAloud />
              <IconButton $w={26} aria-label="Favorite" $color="#55555d"><Star size={15} strokeWidth={1.500} /></IconButton>
            </AddressBar>
            <IconButton $w={37} aria-label="Extensions"><EdgePuzzle /></IconButton>
            <Divider />
            <IconButton $w={37} aria-label="Split screen"><Columns2 size={15} strokeWidth={1.500} /></IconButton>
            <IconButton $w={37} aria-label="Favorites"><Favorites /></IconButton>
            <IconButton $w={37} aria-label="Collections"><Collections /></IconButton>
            <IconButton $w={37} aria-label="Browser essentials"><Essentials /></IconButton>
            <IconButton $w={37} aria-label="More"><Ellipsis size={16} /></IconButton>
          </Toolbar>
          <Bookmarks aria-label="Favorites bar">
            {EDGE_BOOKMARKS.map(([label, icon], i) => (
              <Bookmark key={i} href="#bookmark" aria-label={label || "YouTube shortcut"}>{icon}{label}</Bookmark>
            ))}
            <Overflow aria-label="More favorites"><ChevronRight size={16} strokeWidth={1.500} /></Overflow>
          </Bookmarks>
          <PageFrame><ChatPage user="harsh709" /></PageFrame>
        </EdgeMain>
        <Sidebar>
          <SideButton $first aria-label="Copilot"><Copilot /></SideButton>
          {SIDE_APPS.map(([label, icon]) => <SideButton key={label} aria-label={label}>{icon}</SideButton>)}
          <SideRule />
          <SideButton aria-label="Customize"><Plus size={14} strokeWidth={1.500} /><RedDot /></SideButton>
          <BottomRule />
          <SideButton aria-label="Settings"><Settings size={16} strokeWidth={1.500} /></SideButton>
        </Sidebar>
      </EdgeBody>
    </EdgeWindow>
  );
}

function Firefox() {
  const c = "#4a4a52";
  return (
    <FirefoxWindow>
      <TabStrip $firefox>
        <StripIcons $firefox><ArchiveBox /></StripIcons>
        <FirefoxTab>
          <TabTitle $fade>Select user to change | Django sit</TabTitle>
          <CloseButton aria-label="Close tab" $color={c}><X size={11} /></CloseButton>
        </FirefoxTab>
        <FirefoxTab $active>
          <Comments color="#4b83e8" size={12} />
          <TabTitle>ChatApp with Django</TabTitle>
          <CloseButton aria-label="Close tab" $color={c}><X size={11} /></CloseButton>
        </FirefoxTab>
        <IconButton $w={34} aria-label="New tab" $color={c}><Plus size={14} strokeWidth={1.500} /></IconButton>
        <IconButton $w={34} aria-label="List tabs" $color={c}><ChevronDown size={14} strokeWidth={1.500} /></IconButton>
        <Controls firefox />
      </TabStrip>
      <Toolbar $firefox>
        <IconButton aria-label="Back" $color={c}><ArrowLeft size={16} strokeWidth={1.800} /></IconButton>
        <IconButton aria-label="Forward" $color="#b8b8be"><ArrowRight size={16} strokeWidth={1.800} /></IconButton>
        <IconButton aria-label="Reload" $color={c}><RotateCw size={14} strokeWidth={2} /></IconButton>
        <AddressBar $firefox>
          <Shield size={14} /><File size={14} />
          <AddressInput aria-label="Address" readOnly value="127.0.0.1:8000/chat/Djangochannels/" />
          <ReaderIcon /><Star size={14} />
        </AddressBar>
        <IconButton aria-label="Pocket" $color={c}><Pocket /></IconButton>
        <IconButton aria-label="Account" $color={c}><CircleUser size={14} /></IconButton>
        <IconButton aria-label="Extensions" $color={c}><Extension /></IconButton>
        <IconButton aria-label="Menu" $color={c}><Menu size={14} strokeWidth={1.800} /></IconButton>
      </Toolbar>
      <Bookmarks $firefox aria-label="Bookmarks toolbar">
        {FIREFOX_BOOKMARKS.map(([label, icon], i) => (
          <Bookmark key={i} $firefox href="#bookmark" aria-label={label || "YouTube shortcut"}>{icon}{label}</Bookmark>
        ))}
        <Overflow aria-label="More bookmarks" $color={c}><ChevronsRight size={16} strokeWidth={1.800} /></Overflow>
      </Bookmarks>
      <ChatPage user="aksahy70" firefox />
    </FirefoxWindow>
  );
}

export default function App() {
  return (
    <>
      <GlobalStyle />
      <Desktop>
        <Workspace><Edge /><Firefox /></Workspace>
        <Taskbar>
          <Widget type="button"><EarningsIcon /><div>Upcoming<br /><span>Earnings</span></div></Widget>
          <TaskCenter>
            <TaskButton aria-label="Start"><StartIcon /></TaskButton>
            <SearchBox>
              <Search size={13} style={{ transform: "scaleX(-1)" }} />
              <SearchInput aria-label="Search" placeholder="Search" />
              <LabArt />
            </SearchBox>
            {TASKS.map(([label, icon, state]) => (
              <TaskButton key={label} aria-label={label} $active={state === "active"} $running={state === "running"}>{icon}</TaskButton>
            ))}
          </TaskCenter>
          <Tray>
            <ChevronUp size={14} strokeWidth={1.500} />
            <TrayText $align="center">ENG<br />IN</TrayText>
            <Wifi size={14} /><Volume2 size={15} strokeWidth={1.800} /><Battery />
            <TrayText $align="right">09:21 PM<br />15-05-2024</TrayText>
            <CountBadge>1</CountBadge>
          </Tray>
        </Taskbar>
      </Desktop>
    </>
  );
}
